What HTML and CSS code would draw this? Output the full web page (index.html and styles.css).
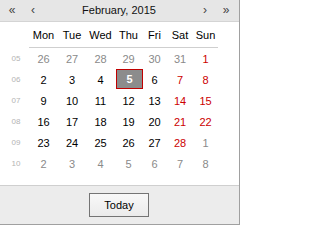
FILE: index.html
```html
<!DOCTYPE html>
<html>
<head>
<meta charset="utf-8">
<link rel="stylesheet" href="styles.css">
</head>
<body>
<div class="cal">
  <div class="head">
    <span class="nav prev2">&laquo;</span>
    <span class="nav prev">&lsaquo;</span>
    <span class="title">February, 2015</span>
    <span class="nav next">&rsaquo;</span>
    <span class="nav next2">&raquo;</span>
  </div>
  <div class="grid">
    <span class="wk"></span>
    <span class="dn">Mon</span><span class="dn">Tue</span><span class="dn">Wed</span><span class="dn">Thu</span><span class="dn">Fri</span><span class="dn">Sat</span><span class="dn">Sun</span>

    <span class="wk">05</span>
    <span class="d o">26</span><span class="d o">27</span><span class="d o">28</span><span class="d o">29</span><span class="d o">30</span><span class="d o">31</span><span class="d we">1</span>

    <span class="wk">06</span>
    <span class="d">2</span><span class="d">3</span><span class="d">4</span><span class="d sel">5</span><span class="d">6</span><span class="d we">7</span><span class="d we">8</span>

    <span class="wk">07</span>
    <span class="d">9</span><span class="d">10</span><span class="d">11</span><span class="d">12</span><span class="d">13</span><span class="d we">14</span><span class="d we">15</span>

    <span class="wk">08</span>
    <span class="d">16</span><span class="d">17</span><span class="d">18</span><span class="d">19</span><span class="d">20</span><span class="d we">21</span><span class="d we">22</span>

    <span class="wk">09</span>
    <span class="d">23</span><span class="d">24</span><span class="d">25</span><span class="d">26</span><span class="d">27</span><span class="d we">28</span><span class="d o">1</span>

    <span class="wk">10</span>
    <span class="d o">2</span><span class="d o">3</span><span class="d o">4</span><span class="d o">5</span><span class="d o">6</span><span class="d o">7</span><span class="d o">8</span>
  </div>
  <div class="foot">
    <button class="today">Today</button>
  </div>
</div>
</body>
</html>
```

FILE: styles.css
```css
html, body {
  margin: 0;
  padding: 0;
  background: #ffffff;
}
.cal {
  width: 239px;
  height: 224px;
  border-right: 1px solid #a0a0a0;
  border-bottom: 1px solid #a0a0a0;
  font-family: "Liberation Sans", Arial, sans-serif;
  font-size: 11px;
  color: #000;
  display: flex;
  flex-direction: column;
  background: #fff;
}
.head {
  height: 21px;
  background: #e6e6e6;
  border-bottom: 1px solid #d4d4d4;
  display: flex;
  align-items: center;
  line-height: 21px;
}
.nav {
  font-size: 12px;
  color: #444;
  text-align: center;
}
.prev2 { width: 12px; margin-left: 6px; }
.prev { width: 12px; margin-left: 9px; }
.title { flex: 1; text-align: center; font-size: 11px; color: #111; }
.next { width: 12px; margin-right: 9px; }
.next2 { width: 12px; margin-right: 7px; }
.grid {
  display: grid;
  grid-template-columns: 29px 29px 28px 29px 27px 25px 26px 25px;
  grid-template-rows: 26px repeat(6, 21px);
  width: 218px;
}
.grid span {
  display: flex;
  align-items: center;
  justify-content: center;
}
.wk {
  font-size: 8px;
  color: #b4b4b4;
  padding-left: 3px;
}
.dn {
  border-bottom: 1px solid #cfcfcf;
  color: #000;
  padding-top: 1px;
}
.d { color: #000; }
.d.o { color: #8a8a8a; }
.d.we { color: #cc0000; }
.d.sel {
  background: #8c8c8c;
  color: #fff;
  font-weight: bold;
  border: 1px solid #c00000;
  margin: 0 -1px 1px 1px;
}
.foot {
  margin-top: 11px;
  flex: 1;
  background: #ececec;
  border-top: 1px solid #cfcfcf;
  display: flex;
  align-items: center;
  justify-content: center;
}
.today {
  width: 60px;
  height: 24px;
  margin-left: -1px;
  padding: 0;
  font-family: "Liberation Sans", Arial, sans-serif;
  font-size: 11px;
  color: #000;
  background: linear-gradient(#f8f8f8, #ebebeb);
  border: 1px solid #747474;
  border-radius: 0;
}
```
